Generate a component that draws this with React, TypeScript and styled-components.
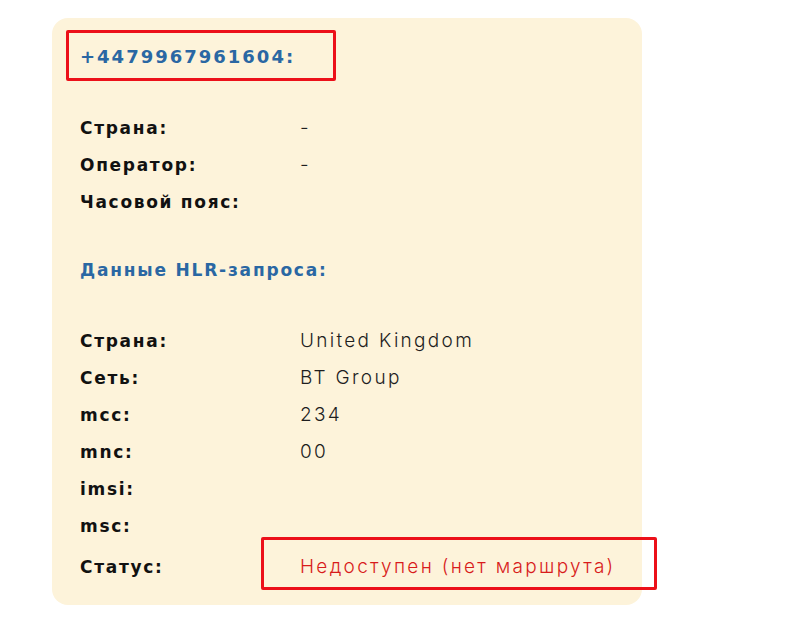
import React from 'react'
import styled, { createGlobalStyle } from 'styled-components'

const GlobalStyle = createGlobalStyle`
  html, body {
    margin: 0;
    padding: 0;
    background: #ffffff;
  }
  body {
    font-family: Inter, "Liberation Sans", sans-serif;
  }
`

const Page = styled.div`
  padding: 18px 0 0 52px;
`

const Card = styled.div`
  position: relative;
  width: 590px;
  height: 587px;
  box-sizing: border-box;
  padding: 20px 0 0 28px;
  background: #fdf3da;
  border-radius: 16px;
`

const Title = styled.div`
  font-family: "DejaVu Sans", Inter, sans-serif;
  font-size: 18px;
  line-height: 37px;
  font-weight: 700;
  color: #2a67a3;
  letter-spacing: 2px;
  margin-bottom: 34px;
`

const SectionTitle = styled(Title)`
  font-size: 17px;
  letter-spacing: 1.8px;
  margin: 32px 0 33px;
`

const Table = styled.div`
  display: grid;
  grid-template-columns: 220px 1fr;
  grid-auto-rows: 37px;
  align-items: center;
`

const Label = styled.div`
  font-family: "DejaVu Sans", Inter, sans-serif;
  font-size: 17px;
  font-weight: 700;
  color: #111;
  letter-spacing: 1.7px;
`

const Value = styled.div<{ $alert?: boolean }>`
  font-size: 19px;
  font-weight: 300;
  color: ${p => (p.$alert ? '#d81b1b' : '#1e1e1e')};
  letter-spacing: 2.3px;
`

const StatusRow = styled(Table)`
  margin-top: 4px;
`

const Marker = styled.div<{ $left: number; $top: number; $w: number; $h: number }>`
  position: absolute;
  left: ${p => p.$left}px;
  top: ${p => p.$top}px;
  width: ${p => p.$w}px;
  height: ${p => p.$h}px;
  box-sizing: border-box;
  border: 3px solid #ec1019;
  border-radius: 2px;
`

const general = [
  ['Страна:', '-'],
  ['Оператор:', '-'],
  ['Часовой пояс:', ''],
]

const hlr = [
  ['Страна:', 'United Kingdom'],
  ['Сеть:', 'BT Group'],
  ['mcc:', '234'],
  ['mnc:', '00'],
  ['imsi:', ''],
  ['msc:', ''],
]

export default function App() {
  return (
    <>
      <GlobalStyle />
      <Page>
        <Card>
          <Title>+4479967961604:</Title>
          <Table>
            {general.map(([k, v]) => (
              <React.Fragment key={k}>
                <Label>{k}</Label>
                <Value>{v}</Value>
              </React.Fragment>
            ))}
          </Table>
          <SectionTitle>Данные HLR-запроса:</SectionTitle>
          <Table>
            {hlr.map(([k, v]) => (
              <React.Fragment key={k}>
                <Label>{k}</Label>
                <Value>{v}</Value>
              </React.Fragment>
            ))}
          </Table>
          <StatusRow>
            <Label>Статус:</Label>
            <Value $alert>Недоступен (нет маршрута)</Value>
          </StatusRow>
          <Marker $left={14} $top={12} $w={270} $h={51} />
          <Marker $left={209} $top={519} $w={396} $h={53} />
        </Card>
      </Page>
    </>
  )
}
